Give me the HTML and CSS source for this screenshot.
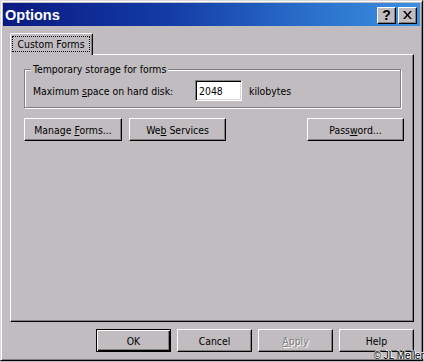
FILE: index.html
```html
<!DOCTYPE html>
<html>
<head>
<meta charset="utf-8">
<link rel="stylesheet" href="styles.css">
</head>
<body>
<div class="window">
  <div class="titlebar">
    <span class="title">Options</span>
    <div class="caption-buttons">
      <div class="cap-btn help">?</div>
      <div class="cap-btn close">
        <svg width="9" height="8" viewBox="0 0 9 8"><path d="M0 0h2l2.5 3 2.5-3h2l-3.5 4 3.5 4h-2l-2.5-3-2.5 3h-2l3.5-4z" fill="#000"/></svg>
      </div>
    </div>
  </div>
  <div class="client">
    <div class="tabs">
      <div class="tab"><span class="focus">Custom Forms</span></div>
    </div>
    <div class="panel">
      <fieldset class="group">
        <legend>Temporary storage for forms</legend>
        <div class="row">
          <span class="label">Maximum <u>s</u>pace on hard disk:</span>
          <span class="input">2048</span>
          <span class="unit">kilobytes</span>
        </div>
      </fieldset>
      <div class="actions">
        <div class="btn w98"><span>Manage <u>F</u>orms...</span></div>
        <div class="btn w97"><span>We<u>b</u> Services</span></div>
        <div class="btn w97 push"><span>Pass<u>w</u>ord...</span></div>
      </div>
    </div>
    <div class="footer">
      <div class="btn w75 default"><span>OK</span></div>
      <div class="btn w75"><span>Cancel</span></div>
      <div class="btn w75 disabled"><span><u>A</u>pply</span></div>
      <div class="btn w75"><span>Help</span></div>
    </div>
  </div>
</div>
<div class="credit">© JL Meller</div>
</body>
</html>
```
FILE: styles.css
```css
html, body {
  margin: 0;
  padding: 0;
}
body {
  width: 424px;
  height: 362px;
  overflow: hidden;
  background: #c0bcc0;
  font-family: "DejaVu Sans Condensed", "DejaVu Sans", sans-serif;
  font-stretch: condensed;
  font-size: 10.4px;
  color: #000;
  position: relative;
}
.window {
  width: 423px;
  height: 361px;
  box-sizing: border-box;
  border: 1px solid;
  border-color: #dcd8dc #000 #000 #dcd8dc;
  box-shadow: inset 1px 1px 0 #fff, inset -1px -1px 0 #808080;
  padding: 2px;
  display: flex;
  flex-direction: column;
}
.titlebar {
  height: 23px;
  flex: none;
  display: flex;
  align-items: center;
  justify-content: space-between;
  background: linear-gradient(to right, #0a1a82 0%, #143ca6 40%, #2a72cc 75%, #3d90e0 100%);
  padding-left: 2px;
}
.title {
  font-family: "Liberation Sans", Arial, sans-serif;
  font-stretch: normal;
  font-weight: bold;
  font-size: 14.5px;
  color: #fff;
  padding-top: 1px;
}
.caption-buttons {
  display: flex;
  gap: 2px;
  margin-right: 3px;
  margin-top: 1px;
}
.cap-btn {
  width: 19px;
  height: 17px;
  box-sizing: border-box;
  border: 1px solid;
  border-color: #fff #000 #000 #fff;
  box-shadow: inset -1px -1px 0 #808080;
  background: #c0bcc0;
  display: flex;
  align-items: center;
  justify-content: center;
}
.help {
  font-family: "Liberation Sans", Arial, sans-serif;
  font-stretch: normal;
  font-weight: bold;
  font-size: 14px;
  line-height: 14px;
  padding-bottom: 1px;
}
.close svg {
  display: block;
  margin-bottom: 1px;
}
.client {
  flex: 1;
  display: flex;
  flex-direction: column;
  padding: 0 6px 6px 7px;
}
.tabs {
  margin-top: 7px;
  height: 21px;
  display: flex;
  flex: none;
}
.tab {
  position: relative;
  z-index: 1;
  width: 83px;
  height: 22px;
  box-sizing: border-box;
  background: #c0bcc0;
  border-top: 1px solid #fff;
  border-left: 1px solid #fff;
  border-right: 1px solid #000;
  border-radius: 2px 2px 0 0;
  box-shadow: inset -1px 0 0 #808080;
  padding: 2px 2px 2px 1px;
}
.focus {
  display: block;
  height: 16px;
  box-sizing: border-box;
  border: 1px dotted #000;
  text-align: center;
  line-height: 14px;
}
.panel {
  flex: 1;
  box-sizing: border-box;
  border: 1px solid;
  border-color: #fff #000 #000 #fff;
  box-shadow: inset -1px -1px 0 #808080;
  padding: 8px 9px 0 13px;
  display: flex;
  flex-direction: column;
}
.group {
  margin: 0 3px 0 0;
  padding: 4px 8px 6px 8px;
  border: 1px solid #808080;
  box-shadow: 1px 1px 0 #fff, inset 1px 1px 0 #fff;
  min-width: 0;
}
.group legend {
  padding: 0 2px;
  margin-left: -2px;
  line-height: 13px;
  background: #c0bcc0;
}
.row {
  display: flex;
  align-items: center;
  height: 21px;
}
.label {
  width: 162px;
  flex: none;
}
.input {
  width: 47px;
  height: 21px;
  box-sizing: border-box;
  background: #fff;
  border: 1px solid;
  border-color: #808080 #fff #fff #808080;
  box-shadow: inset 1px 1px 0 #000, inset -1px -1px 0 #dcd8dc;
  padding-left: 3px;
  display: flex;
  align-items: center;
}
.unit {
  margin-left: 7px;
}
.actions {
  display: flex;
  gap: 7px;
  margin-top: 10px;
}
.push {
  margin-left: auto;
}
.btn {
  height: 23px;
  box-sizing: border-box;
  border: 1px solid;
  border-color: #fff #000 #000 #fff;
  box-shadow: inset -1px -1px 0 #808080;
  background: #c0bcc0;
  display: flex;
  align-items: center;
  justify-content: center;
  flex: none;
  white-space: nowrap;
}
.w98 { width: 98px; }
.w97 { width: 97px; }
.w75 { width: 75px; }
.btn.default {
  border-color: #000;
  box-shadow: inset 1px 1px 0 #fff, inset -1px -1px 0 #000, inset -2px -2px 0 #808080;
}
.btn.disabled {
  color: #808080;
  text-shadow: 1px 1px 0 #fff;
}
.footer {
  display: flex;
  justify-content: flex-end;
  gap: 6px;
  margin-top: 7px;
  flex: none;
}
.credit {
  position: absolute;
  right: 0;
  bottom: 0;
  font-family: "Liberation Sans", Arial, sans-serif;
  font-stretch: normal;
  font-size: 10px;
  line-height: 12px;
  color: #000;
  white-space: nowrap;
  text-shadow: 1px 0 0 #fff, 0 -1px 0 #fff;
}
```
